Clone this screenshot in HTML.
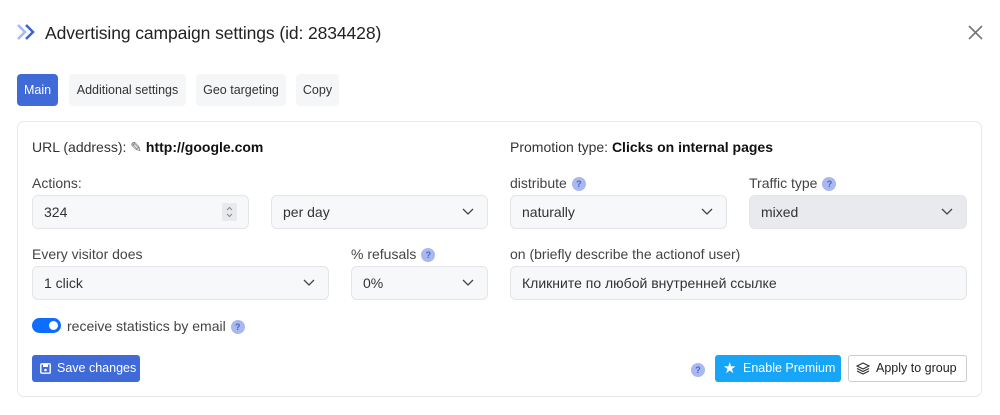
<!DOCTYPE html><html><head><meta charset="utf-8"><style>
*{box-sizing:border-box;margin:0;padding:0}
body{width:1000px;height:415px;background:#fff;font-family:"Liberation Sans","DejaVu Sans",sans-serif;color:#333;position:relative;overflow:hidden}
.a{position:absolute;white-space:nowrap}
.tab{position:absolute;top:74px;height:32px;line-height:32px;font-size:12.5px;text-align:center;background:#f5f6f8;border-radius:4px;color:#333}
.lbl{position:absolute;font-size:14px;color:#444;white-space:nowrap}
.f{position:absolute;height:34px;border:1px solid #e3e5e8;background:#f7f8f9;border-radius:6px;font-size:14px;line-height:32px;padding-left:11px;color:#333;white-space:nowrap}
.chev{position:absolute;right:13px;top:12px}
.q{display:inline-block;width:14px;height:14px;border-radius:50%;background:#a9b9ef;color:#4a63c9;font-size:9px;line-height:14px;text-align:center;vertical-align:1px;margin-left:5px;font-weight:bold}
</style></head><body>
<svg class="a" style="left:16px;top:23px" width="22" height="18" viewBox="0 0 22 18"><path d="M2 2l7 7-7 7" stroke="#a8b8f0" stroke-width="2.5" fill="none"/><path d="M10 2l7 7-7 7" stroke="#3d63d6" stroke-width="2.5" fill="none"/></svg>
<div class="a" style="left:45px;top:23px;font-size:17.5px;color:#222;letter-spacing:-0.1px">Advertising campaign settings (id: 2834428)</div>
<svg class="a" style="left:968px;top:25px" width="15" height="15"><path d="M1 1l13 13M14 1L1 14" stroke="#777" stroke-width="1.6"/></svg>
<div class="tab" style="left:17px;width:41px;background:#3f6ad8;color:#fff">Main</div>
<div class="tab" style="left:69px;width:117px">Additional settings</div>
<div class="tab" style="left:196px;width:90px">Geo targeting</div>
<div class="tab" style="left:296px;width:43px">Copy</div>
<div class="a" style="left:17px;top:121px;width:965px;height:276px;border:1px solid #e6e8eb;border-radius:7px"></div>
<div class="lbl" style="left:32px;top:139px;color:#333">URL (address): <span style="color:#666">✎</span> <b style="color:#111">http://google.com</b></div>
<div class="lbl" style="left:510px;top:139px;color:#333">Promotion type: <b style="color:#111">Clicks on internal pages</b></div>
<div class="lbl" style="left:32px;top:175px">Actions:</div>
<div class="f" style="left:32px;top:195px;width:217px">324<svg class="a" style="right:11px;top:7px" width="15" height="18"><rect width="15" height="18" rx="2" fill="#e8e9ec"/><path d="M5 7l2.5-2.5L10 7M5 11l2.5 2.5L10 11" stroke="#888" stroke-width="1" fill="none"/></svg></div>
<div class="f" style="left:271px;top:195px;width:217px">per day<svg class="chev" width="12" height="8"><path d="M1 1l5 5 5-5" stroke="#444" stroke-width="1.3" fill="none"/></svg></div>
<div class="lbl" style="left:510px;top:175px">distribute<span class="q">?</span></div>
<div class="lbl" style="left:749px;top:175px">Traffic type<span class="q">?</span></div>
<div class="f" style="left:510px;top:195px;width:217px">naturally<svg class="chev" width="12" height="8"><path d="M1 1l5 5 5-5" stroke="#444" stroke-width="1.3" fill="none"/></svg></div>
<div class="f" style="left:749px;top:195px;width:218px;background:#e9eaee">mixed<svg class="chev" width="12" height="8"><path d="M1 1l5 5 5-5" stroke="#444" stroke-width="1.3" fill="none"/></svg></div>
<div class="lbl" style="left:32px;top:246px">Every visitor does</div>
<div class="lbl" style="left:351px;top:246px">% refusals<span class="q">?</span></div>
<div class="lbl" style="left:510px;top:246px">on (briefly describe the actionof user)</div>
<div class="f" style="left:32px;top:266px;width:297px">1 click<svg class="chev" width="12" height="8"><path d="M1 1l5 5 5-5" stroke="#444" stroke-width="1.3" fill="none"/></svg></div>
<div class="f" style="left:351px;top:266px;width:137px">0%<svg class="chev" width="12" height="8"><path d="M1 1l5 5 5-5" stroke="#444" stroke-width="1.3" fill="none"/></svg></div>
<div class="f" style="left:510px;top:266px;width:457px">Кликните по любой внутренней ссылке</div>
<div class="a" style="left:32px;top:318px;width:29px;height:15px;border-radius:8px;background:#0d6efd"><div class="a" style="right:3px;top:3px;width:9px;height:9px;border-radius:50%;background:#fff"></div></div>
<div class="lbl" style="left:67px;top:318px">receive statistics by email<span class="q">?</span></div>
<div class="a" style="left:32px;top:355px;width:108px;height:27px;background:#3f6ad8;border-radius:3px;color:#fff;font-size:12.5px;line-height:27px;padding-left:25px">Save changes
<svg class="a" style="left:8px;top:8px" width="11" height="11" viewBox="0 0 11 11"><rect x="0.8" y="0.8" width="9.4" height="9.4" rx="1" fill="none" stroke="#fff" stroke-width="1.4"/><rect x="3" y="1" width="5" height="3" fill="#fff"/><circle cx="5.5" cy="7" r="1.3" fill="#fff"/></svg></div>
<div class="a" style="left:691px;top:361px"><span class="q" style="margin:0">?</span></div>
<div class="a" style="left:715px;top:355px;width:126px;height:27px;background:#16a5f7;border-radius:3px;color:#fff;font-size:12.5px;line-height:27px;padding-left:28px">Enable Premium
<span class="a" style="left:8px;top:0;font-size:15px">★</span></div>
<div class="a" style="left:848px;top:355px;width:119px;height:27px;border:1px solid #ccc;border-radius:3px;color:#222;font-size:12.5px;line-height:25px;padding-left:27px;background:#fff">Apply to group
<svg class="a" style="left:7px;top:6px" width="14" height="13" viewBox="0 0 14 13"><path d="M7 1l6 3-6 3-6-3z M1 6.5l6 3 6-3 M1 9l6 3 6-3" stroke="#333" stroke-width="1.2" fill="none"/></svg></div>
</body></html>
